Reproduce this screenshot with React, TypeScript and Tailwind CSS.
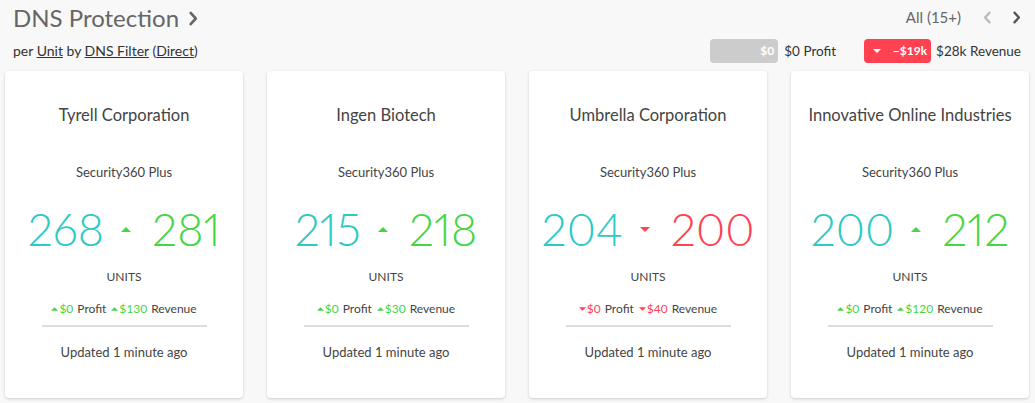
import React from "react";

type Card = {
  name: string;
  from: number;
  to: number;
  up: boolean;
  profit: string;
  revenue: string;
};

const cards: Card[] = [
  { name: "Tyrell Corporation", from: 268, to: 281, up: true, profit: "$0", revenue: "$130" },
  { name: "Ingen Biotech", from: 215, to: 218, up: true, profit: "$0", revenue: "$30" },
  { name: "Umbrella Corporation", from: 204, to: 200, up: false, profit: "$0", revenue: "$40" },
  { name: "Innovative Online Industries", from: 200, to: 212, up: true, profit: "$0", revenue: "$120" },
];

function Tri({ up, className }: { up: boolean; className: string }) {
  return (
    <svg viewBox="0 0 8 4" className={className}>
      {up ? <polygon points="0,4 8,4 4,0" fill="currentColor" /> : <polygon points="0,0 8,0 4,4" fill="currentColor" />}
    </svg>
  );
}

function Chevron({ dir, className }: { dir: "left" | "right"; className: string }) {
  return (
    <svg viewBox="0 0 10 16" className={className} fill="none" stroke="currentColor" strokeWidth="2.8" strokeLinecap="round" strokeLinejoin="round">
      {dir === "right" ? <polyline points="2.5,2 8,8 2.5,14" /> : <polyline points="7.5,2 2,8 7.5,14" />}
    </svg>
  );
}

function CardView({ c }: { c: Card }) {
  const deltaColor = c.up ? "text-[#44d644]" : "text-[#ff4152]";
  return (
    <div className="flex h-[327px] flex-col items-center rounded-[4px] bg-white shadow-[0_1px_3px_rgba(0,0,0,0.18)]">
      <div className="mt-[33px] text-[16.5px] leading-[22px] text-[#444]">{c.name}</div>
      <div className="mt-[38px] text-[13px] leading-[16px] text-[#444]">Security360 Plus</div>
      <div className="mt-[21px] flex items-center text-[45px] font-light leading-[56px] proportional-nums [font-feature-settings:'pnum']">
        <span className="text-[#2ec9c4]">{c.from}</span>
        <Tri up={c.up} className={`ml-[17px] mr-[21px] h-[5px] w-[10px] ${deltaColor}`} />
        <span className={deltaColor}>{c.to}</span>
      </div>
      <div className="mt-[12px] text-[12px] leading-[15px] text-[#444]">UNITS</div>
      <div className="mt-[17px] flex items-center text-[12px] leading-[15px] text-[#444]">
        <Tri up={c.up} className={`mr-[1px] h-[4px] w-[7px] ${deltaColor}`} />
        <span className={deltaColor}>{c.profit}</span>
        <span className="ml-[4px]">Profit</span>
        <Tri up={c.up} className={`ml-[5px] mr-[1px] h-[4px] w-[7px] ${deltaColor}`} />
        <span className={deltaColor}>{c.revenue}</span>
        <span className="ml-[4px]">Revenue</span>
      </div>
      <div className="mt-[9px] h-[2px] w-[165px] bg-[#dddddd]" />
      <div className="mt-[17px] text-[13px] leading-[16px] text-[#444]">Updated 1 minute ago</div>
    </div>
  );
}

export default function App() {
  return (
    <div className="h-[403px] w-[1035px] bg-[#f8f8f8] font-['Lato',sans-serif] text-[#444]">
      <div className="flex items-start justify-between pl-[13px] pr-[14px]">
        <div>
          <div className="flex items-center pt-[3px]">
            <span className="text-[24px] leading-[30px] text-[#666]">DNS Protection</span>
            <Chevron dir="right" className="ml-[9px] h-[15px] w-[10px] text-[#666]" />
          </div>
          <div className="mt-[10px] text-[14px] leading-[16px] text-[#333]">
            per <span className="underline">Unit</span> by <span className="underline">DNS Filter</span> (<span className="underline">Direct</span>)
          </div>
        </div>
        <div className="flex flex-col items-end">
          <div className="flex items-center pt-[7px]">
            <span className="text-[15px] leading-[20px] text-[#666]">All (15+)</span>
            <Chevron dir="left" className="ml-[22px] h-[13px] w-[9px] text-[#bbb]" />
            <Chevron dir="right" className="ml-[20px] h-[13px] w-[9px] text-[#555]" />
          </div>
          <div className="mt-[12px] flex items-center text-[13.5px] leading-[16px] text-[#333]">
            <div className="flex h-[24px] w-[68px] items-center justify-end rounded-[4px] bg-[#cccccc] pr-[4px] text-[12px] font-bold text-white">$0</div>
            <span className="ml-[6px]">$0 Profit</span>
            <div className="ml-[28px] flex h-[24px] w-[67px] items-center justify-between rounded-[4px] bg-[#ff4152] pl-[9px] pr-[4px] text-[12px] font-bold text-white">
              <Tri up={false} className="h-[4px] w-[8px] text-white" />
              <span>−$19k</span>
            </div>
            <span className="ml-[5px]">$28k Revenue</span>
          </div>
        </div>
      </div>
      <div className="mt-[8px] grid grid-cols-4 gap-[24px] pl-[5px] pr-[6px]">
        {cards.map((c) => (
          <CardView key={c.name} c={c} />
        ))}
      </div>
    </div>
  );
}
